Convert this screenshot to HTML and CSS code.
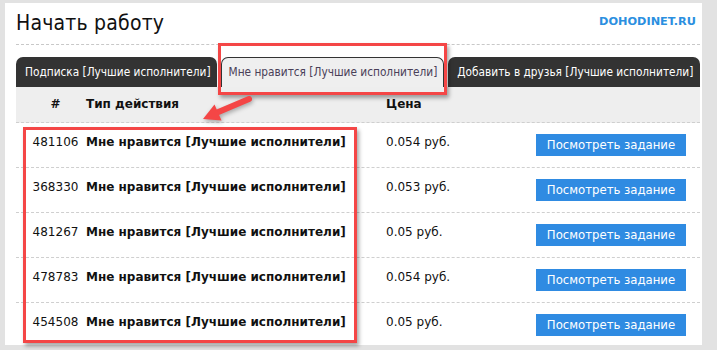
FILE: index.html
```html
<!DOCTYPE html>
<html lang="ru">
<head>
<meta charset="utf-8">
<title>Начать работу</title>
<link rel="stylesheet" href="styles.css">
</head>
<body>
<div class="panel">
  <div class="head">
    <h1 class="title">Начать работу</h1>
    <div class="logo">DOHODINET.RU</div>
  </div>
  <div class="rule"></div>
  <div class="tabs">
    <div class="tab">Подписка [Лучшие исполнители]</div>
    <div class="tab active">Мне нравится [Лучшие исполнители]</div>
    <div class="tab last">Добавить в друзья [Лучшие исполнители]</div>
  </div>
  <div class="table">
    <div class="row thead">
      <div class="c1">#</div>
      <div class="c2">Тип действия</div>
      <div class="c3">Цена</div>
      <div class="c4"></div>
    </div>
    <div class="row">
      <div class="c1">481106</div>
      <div class="c2 type">Мне нравится [Лучшие исполнители]</div>
      <div class="c3">0.054 руб.</div>
      <div class="c4"><span class="btn">Посмотреть задание</span></div>
    </div>
    <div class="row">
      <div class="c1">368330</div>
      <div class="c2 type">Мне нравится [Лучшие исполнители]</div>
      <div class="c3">0.053 руб.</div>
      <div class="c4"><span class="btn">Посмотреть задание</span></div>
    </div>
    <div class="row">
      <div class="c1">481267</div>
      <div class="c2 type">Мне нравится [Лучшие исполнители]</div>
      <div class="c3">0.05 руб.</div>
      <div class="c4"><span class="btn">Посмотреть задание</span></div>
    </div>
    <div class="row">
      <div class="c1">478783</div>
      <div class="c2 type">Мне нравится [Лучшие исполнители]</div>
      <div class="c3">0.054 руб.</div>
      <div class="c4"><span class="btn">Посмотреть задание</span></div>
    </div>
    <div class="row">
      <div class="c1">454508</div>
      <div class="c2 type">Мне нравится [Лучшие исполнители]</div>
      <div class="c3">0.05 руб.</div>
      <div class="c4"><span class="btn">Посмотреть задание</span></div>
    </div>
  </div>
</div>
<div class="mark mark-tab"></div>
<div class="mark mark-rows"></div>
<svg class="arrow" width="717" height="350" viewBox="0 0 717 350">
  <line x1="249" y1="99" x2="216" y2="113" stroke="#f44646" stroke-width="6" stroke-linecap="round"/>
  <polygon points="203,119 214.5,104.5 221.5,120.5" fill="#f44646"/>
</svg>
</body>
</html>
```
FILE: styles.css
```css
html, body {
  margin: 0;
  padding: 0;
}
body {
  background: #e2e2e2;
  width: 717px;
  height: 350px;
  overflow: hidden;
  position: relative;
  font-family: "DejaVu Sans", Verdana, sans-serif;
  color: #111;
}
.panel {
  margin: 3px 15px 0 5px;
  height: 342px;
  background: #fff;
  padding: 0 2px 0 11px;
  overflow: hidden;
}
.head {
  display: flex;
  justify-content: space-between;
  align-items: flex-start;
  height: 41px;
}
.title {
  margin: 7px 0 0 0;
  font-family: "DejaVu Sans Condensed", "DejaVu Sans", sans-serif;
  font-weight: normal;
  font-size: 21px;
  letter-spacing: 0.2px;
  line-height: 26px;
  color: #111;
}
.logo {
  margin: 11px 4px 0 0;
  font-size: 11.3px;
  font-weight: bold;
  color: #2b8fe0;
  line-height: 16px;
}
.rule {
  border-top: 1px dashed #c8c8c8;
}
.tabs {
  display: flex;
  gap: 4px;
  margin-top: 12px;
  height: 30px;
}
.tab {
  background: #333;
  color: #fff;
  font-family: "DejaVu Sans Condensed", "DejaVu Sans", sans-serif;
  font-size: 11.75px;
  line-height: 30px;
  padding: 0 6px 0 9px;
  border-radius: 7px 7px 0 0;
  white-space: nowrap;
}
.tab.active {
  background: #efefef;
  color: #4a4058;
  border: 1px solid #333;
  border-bottom: none;
  line-height: 29px;
  padding: 0 6px 0 7px;
}
.tab.last {
  flex: 1;
  padding-left: 9px;
}
.table {
  font-size: 12px;
}
.row {
  display: grid;
  grid-template-columns: 70px 300px 150px 150px;
  height: 44px;
  border-bottom: 1px dashed #cfcfcf;
  align-items: start;
}
.row > div {
  padding-top: 11px;
  line-height: 16px;
}
.thead {
  background: #eee;
  height: 35px;
  font-weight: bold;
  font-size: 12px;
}
.thead > div {
  padding-top: 9px;
}
.c1 {
  text-align: center;
  padding-left: 9px;
}
.type {
  font-weight: bold;
}
.c4 {
  display: flex;
}
.btn {
  display: block;
  width: 150px;
  height: 22px;
  line-height: 22px;
  background: #2f8be2;
  color: #fff;
  text-align: center;
  font-family: "DejaVu Sans Condensed", "DejaVu Sans", sans-serif;
  font-size: 13px;
}
.mark {
  position: absolute;
  border: 3px solid #f44646;
  box-shadow: 2px 3px 4px rgba(0, 0, 0, 0.35);
}
.mark-tab {
  left: 218px;
  top: 43px;
  width: 223px;
  height: 46px;
}
.mark-rows {
  left: 23px;
  top: 127px;
  width: 328px;
  height: 210px;
}
.arrow {
  position: absolute;
  left: 0;
  top: 0;
  filter: drop-shadow(1px 2px 2px rgba(0, 0, 0, 0.3));
}
```
